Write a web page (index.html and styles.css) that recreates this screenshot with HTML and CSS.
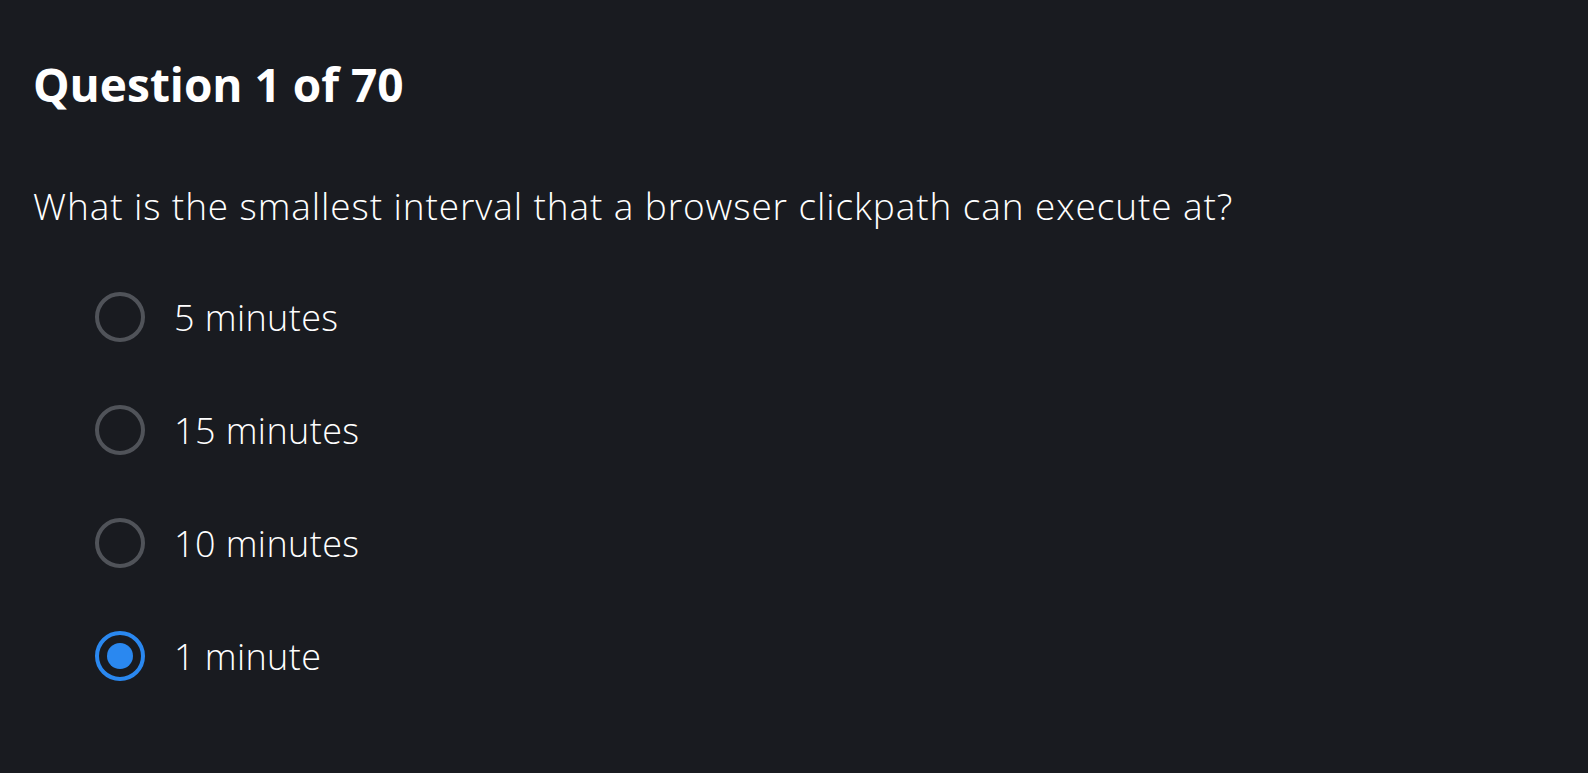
FILE: index.html
```html
<!DOCTYPE html>
<html>
<head>
<meta charset="utf-8">
<link rel="stylesheet" href="styles.css">
</head>
<body>
<main class="quiz">
  <h1 class="title">Question 1 of 70</h1>
  <p class="question">What is the smallest interval that a browser clickpath can execute at?</p>
  <ul class="options">
    <li class="option"><span class="radio"></span><span class="label">5 minutes</span></li>
    <li class="option"><span class="radio"></span><span class="label">15 minutes</span></li>
    <li class="option"><span class="radio"></span><span class="label">10 minutes</span></li>
    <li class="option"><span class="radio checked"></span><span class="label">1 minute</span></li>
  </ul>
</main>
</body>
</html>
```
FILE: styles.css
```css
html, body {
  margin: 0;
  padding: 0;
  background: #191b20;
  height: 100%;
}
body {
  color: #ffffff;
  font-family: "Open Sans", "Noto Sans", sans-serif;
}
.quiz {
  padding: 52px 33px 0 33px;
}
.title {
  margin: 0;
  font-size: 46px;
  font-weight: 700;
  line-height: 64px;
}
.question {
  margin: 65px 0 0 0;
  font-size: 37px;
  font-weight: 300;
  letter-spacing: 0.9px;
  line-height: 50px;
}
.options {
  list-style: none;
  margin: 61px 0 0 0;
  padding: 0 0 0 62px;
  display: flex;
  flex-direction: column;
  gap: 63px;
}
.option {
  display: flex;
  align-items: center;
  gap: 29px;
  height: 50px;
}
.radio {
  box-sizing: border-box;
  flex: none;
  width: 50px;
  height: 50px;
  border-radius: 50%;
  border: 4px solid #505359;
  display: flex;
  align-items: center;
  justify-content: center;
}
.radio.checked {
  border-color: #2a88f0;
}
.radio.checked::after {
  content: "";
  width: 26px;
  height: 26px;
  border-radius: 50%;
  background: #2a88f0;
}
.label {
  font-size: 36px;
  font-weight: 300;
  letter-spacing: 0.4px;
}
```
